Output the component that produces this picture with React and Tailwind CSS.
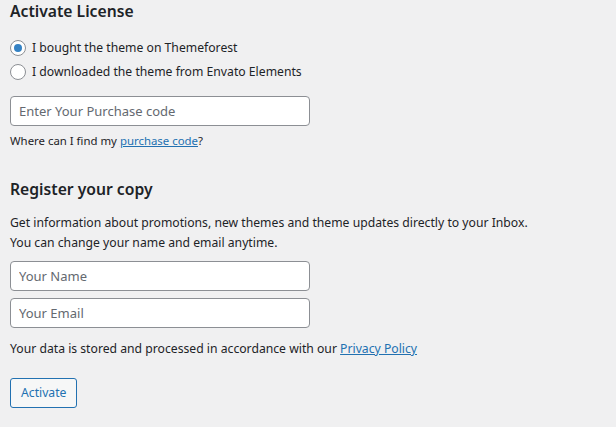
import { useState } from 'react';

const inputClass =
  'block w-[300px] h-[30px] rounded-[4px] border border-[#8c8f94] bg-white px-[8px] text-[13px] text-[#2c3338] placeholder:text-[#646970] outline-none focus:border-[#2271b1]';

function Radio({ checked, onChange, children }) {
  return (
    <label className="flex h-6 items-center gap-[6px] cursor-pointer">
      <span className="flex h-4 w-4 items-center justify-center rounded-full border border-[#8c8f94] bg-white">
        {checked && <span className="h-2 w-2 rounded-full bg-[#3582c4]" />}
      </span>
      <input type="radio" className="hidden" checked={checked} onChange={onChange} />
      <span>{children}</span>
    </label>
  );
}

export default function App() {
  const [source, setSource] = useState('themeforest');

  return (
    <div className="min-h-screen bg-[#f0f0f1] px-[10px] text-[12.2px] leading-[20px] text-[#1d2327] font-['Noto_Sans',sans-serif]">
      {/* License */}
      <h2 className="text-[15.7px] font-semibold leading-[22px]">Activate License</h2>

      <div className="mt-[14px]">
        <Radio checked={source === 'themeforest'} onChange={() => setSource('themeforest')}>
          I bought the theme on Themeforest
        </Radio>
        <Radio checked={source === 'elements'} onChange={() => setSource('elements')}>
          I downloaded the theme from Envato Elements
        </Radio>
      </div>

      <input type="text" placeholder="Enter Your Purchase code" className={`${inputClass} mt-[12px]`} />
      <p className="mt-[5px] text-[11.4px]">
        Where can I find my{' '}
        <a href="#" className="text-[#2271b1] underline">purchase code</a>?
      </p>

      {/* Registration */}
      <h2 className="mt-[27px] text-[15.7px] font-semibold leading-[22px]">Register your copy</h2>
      <p className="mt-[13px]">
        Get information about promotions, new themes and theme updates directly to your Inbox.
        <br />
        You can change your name and email anytime.
      </p>

      <input type="text" placeholder="Your Name" className={`${inputClass} mt-[8px]`} />
      <input type="email" placeholder="Your Email" className={`${inputClass} mt-[7px]`} />

      <p className="mt-[11px]">
        Your data is stored and processed in accordance with our{' '}
        <a href="#" className="text-[#2271b1] underline">Privacy Policy</a>
      </p>

      <button className="mt-[19px] h-[30px] rounded-[3px] border border-[#2271b1] bg-[#f6f7f7] px-[10px] text-[12.2px] text-[#2271b1]">
        Activate
      </button>
    </div>
  );
}
